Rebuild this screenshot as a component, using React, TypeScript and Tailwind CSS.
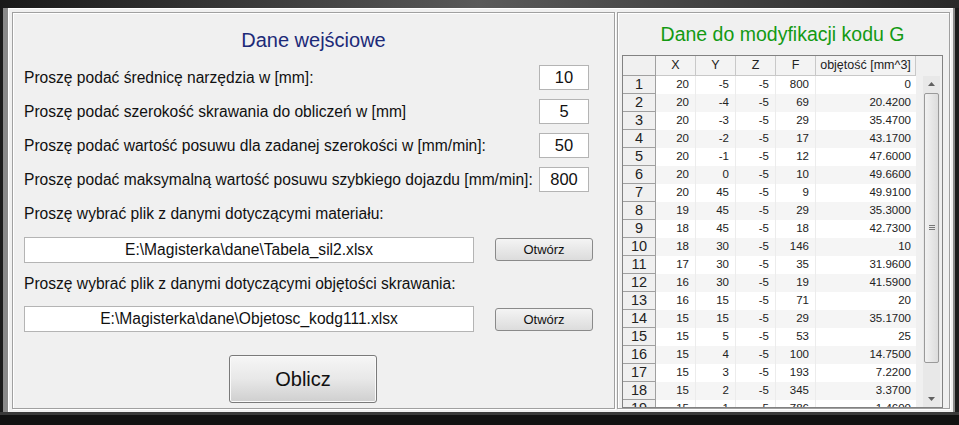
import React from 'react';

const rows: [number, number, number, number, string][] = [
  [20, -5, -5, 800, '0'],
  [20, -4, -5, 69, '20.4200'],
  [20, -3, -5, 29, '35.4700'],
  [20, -2, -5, 17, '43.1700'],
  [20, -1, -5, 12, '47.6000'],
  [20, 0, -5, 10, '49.6600'],
  [20, 45, -5, 9, '49.9100'],
  [19, 45, -5, 29, '35.3000'],
  [18, 45, -5, 18, '42.7300'],
  [18, 30, -5, 146, '10'],
  [17, 30, -5, 35, '31.9600'],
  [16, 30, -5, 19, '41.5900'],
  [16, 15, -5, 71, '20'],
  [15, 15, -5, 29, '35.1700'],
  [15, 5, -5, 53, '25'],
  [15, 4, -5, 100, '14.7500'],
  [15, 3, -5, 193, '7.2200'],
  [15, 2, -5, 345, '3.3700'],
  [15, 1, -5, 786, '1.4600'],
];

const params = [
  { label: 'Proszę podać średnicę narzędzia w [mm]:', value: '10' },
  { label: 'Proszę podać szerokość skrawania do obliczeń w [mm]', value: '5' },
  { label: 'Proszę podać wartość posuwu dla zadanej szerokości w [mm/min]:', value: '50' },
  { label: 'Proszę podać maksymalną wartość posuwu szybkiego dojazdu [mm/min]:', value: '800' },
];

const FileRow = ({ path }: { path: string }) => (
  <div className="flex items-center h-[26px]">
    <div className="w-[450px] h-[26px] bg-white border border-[#b4b4b4] flex items-center justify-center text-[15.6px] text-[#111]">
      {path}
    </div>
    <button className="ml-[21px] w-[98px] h-[23px] rounded-[3px] border border-[#8a8a8a] bg-gradient-to-b from-[#f4f4f4] to-[#dcdcdc] text-[13px] text-[#111] leading-none">
      Otwórz
    </button>
  </div>
);

export default function App() {
  return (
    <div className="w-[959px] h-[425px] overflow-hidden bg-[#1c1c1c] font-['Liberation_Sans',Arial,sans-serif]">
      {/* window frame */}
      <div className="h-[8px] bg-gradient-to-r from-[#1a1a1a] via-[#5a5a5a] to-[#2a2a2a]" />
      <div className="flex h-[404px] pl-[3px] pr-[4px]">
        <div className="w-[5px] bg-[#8a8a8a]" />
        <div className="flex-1 bg-[#f0f0f0] border-t border-l border-white p-[3px] flex gap-[2px]">
          {/* left panel */}
          <div className="w-[603px] h-full border border-[#a0a0a0] shadow-[inset_1px_1px_0_#fff,1px_1px_0_#fff] flex flex-col">
            <div className="text-center text-[20px] text-[#1c2a78] mt-[17px] leading-none">Dane wejściowe</div>
            <div className="flex flex-col mt-[15px] pl-[11px] pr-[25px] gap-[9px]">
              {params.map((p) => (
                <div key={p.label} className="flex items-center justify-between h-[25px]">
                  <span className="text-[15.6px] text-[#111] leading-none whitespace-nowrap">{p.label}</span>
                  <div className="w-[50px] h-[25px] bg-white border border-[#b4b4b4] flex items-center justify-center text-[16.5px] text-[#111]">
                    {p.value}
                  </div>
                </div>
              ))}
            </div>
            <div className="pl-[11px] mt-[14px] flex flex-col">
              <span className="text-[15.6px] text-[#111] leading-none">Proszę wybrać plik z danymi dotyczącymi materiału:</span>
              <div className="mt-[15px]">
                <FileRow path="E:\Magisterka\dane\Tabela_sil2.xlsx" />
              </div>
              <span className="text-[15.6px] text-[#111] leading-none mt-[13px]">Proszę wybrać plik z danymi dotyczącymi objętości skrawania:</span>
              <div className="mt-[15px]">
                <FileRow path="E:\Magisterka\dane\Objetosc_kodg111.xlsx" />
              </div>
            </div>
            <div className="flex mt-[23px] pl-[216px]">
              <button className="w-[148px] h-[48px] rounded-[3px] border border-[#7a7a7a] bg-gradient-to-b from-[#f6f6f6] via-[#e8e8e8] to-[#cfcfcf] text-[20px] text-[#111] shadow-[inset_0_0_0_1px_#fafafa]">
                Oblicz
              </button>
            </div>
          </div>
          {/* right panel */}
          <div className="flex-1 h-full border border-[#a0a0a0] shadow-[inset_1px_1px_0_#fff,1px_1px_0_#fff] flex flex-col px-[4px]">
            <div className="text-center text-[19.5px] text-[#139a13] mt-[12px] leading-none pr-[2px]">Dane do modyfikacji kodu G</div>
            <div className="mt-[10px] w-[321px] h-[354px] border border-[#828282] bg-[#f0f0f0] relative overflow-hidden">
              <div className="flex h-[20px] text-[12.5px] text-[#222]">
                <div className="w-[33px] border-r border-b border-[#a0a0a0]" />
                {['X', 'Y', 'Z', 'F'].map((h) => (
                  <div key={h} className="w-[40px] border-r border-b border-[#c8c8c8] bg-[#f3f3f3] flex items-center justify-center">{h}</div>
                ))}
                <div className="w-[100px] border-r border-b border-[#c8c8c8] bg-[#f3f3f3] flex items-center justify-center whitespace-nowrap">objętość [mm^3]</div>
              </div>
              {rows.map((r, i) => (
                <div key={i} className="flex h-[18px] text-[11.5px] text-[#222]">
                  <div className="w-[33px] border-r border-b border-[#a0a0a0] flex items-center justify-center text-[14.5px] leading-none">{i + 1}</div>
                  <div className={`flex ${i % 2 === 0 ? 'bg-white' : 'bg-[#f5f5f5]'}`}>
                    {[r[0], r[1], r[2], r[3]].map((v, j) => (
                      <div key={j} className="w-[40px] border-r border-[#ececec] flex items-center justify-end pr-[6px]">{v}</div>
                    ))}
                    <div className="w-[100px] flex items-center justify-end pr-[5px]">{r[4]}</div>
                  </div>
                </div>
              ))}
              {/* scrollbar */}
              <div className="absolute right-[2px] top-[20px] bottom-0 w-[17px] bg-[#e8e8e8] flex flex-col items-center">
                <div className="h-[17px] flex items-center justify-center">
                  <svg width="7" height="4" viewBox="0 0 7 4"><path d="M0 4 L3.5 0 L7 4 Z" fill="#606060" /></svg>
                </div>
                <div className="w-[15px] h-[270px] rounded-[2px] border border-[#9a9a9a] bg-gradient-to-r from-[#f2f2f2] to-[#dcdcdc] flex items-center justify-center">
                  <div className="flex flex-col gap-[1px]">
                    <div className="w-[6px] h-[1px] bg-[#777]" />
                    <div className="w-[6px] h-[1px] bg-[#777]" />
                    <div className="w-[6px] h-[1px] bg-[#777]" />
                  </div>
                </div>
                <div className="flex-1" />
                <div className="h-[17px] flex items-center justify-center">
                  <svg width="7" height="4" viewBox="0 0 7 4"><path d="M0 0 L3.5 4 L7 0 Z" fill="#606060" /></svg>
                </div>
              </div>
            </div>
          </div>
        </div>
        <div className="w-[2px] bg-[#8a8a8a]" />
      </div>
      <div className="h-[13px] bg-[#111] border-t-[3px] border-[#3a3a3a]" />
    </div>
  );
}
